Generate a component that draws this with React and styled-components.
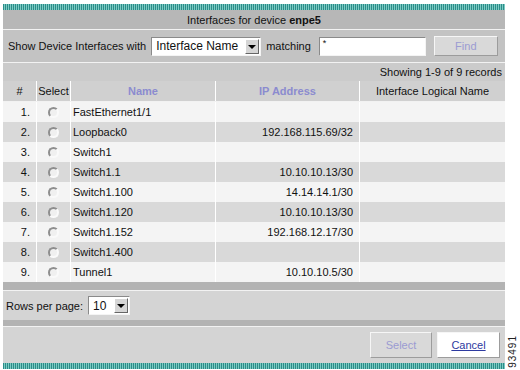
import styled, { createGlobalStyle } from "styled-components";

const rows = [
  { name: "FastEthernet1/1", ip: "" },
  { name: "Loopback0", ip: "192.168.115.69/32" },
  { name: "Switch1", ip: "" },
  { name: "Switch1.1", ip: "10.10.10.13/30" },
  { name: "Switch1.100", ip: "14.14.14.1/30" },
  { name: "Switch1.120", ip: "10.10.10.13/30" },
  { name: "Switch1.152", ip: "192.168.12.17/30" },
  { name: "Switch1.400", ip: "" },
  { name: "Tunnel1", ip: "10.10.10.5/30" },
];

const App = () => {
  return (
    <>
      <GlobalStyle />
      <Page>
        <Panel>
          <Stripe />
          <TitleBar>
            Interfaces for device&nbsp;<b>enpe5</b>
          </TitleBar>
          <FilterRow>
            <span>Show Device Interfaces with</span>
            <FakeSelect width={110}>
              <span>Interface Name</span>
              <DropButton />
            </FakeSelect>
            <span>matching</span>
            <TextBox>*</TextBox>
            <Button disabledLook width={64}>Find</Button>
          </FilterRow>
          <RecordsRow>Showing 1-9 of 9 records</RecordsRow>
          <TableRow header>
            <Cell align="center">#</Cell>
            <Cell align="center">Select</Cell>
            <Cell align="center" sort>Name</Cell>
            <Cell align="center" sort>IP Address</Cell>
            <Cell align="center">Interface Logical Name</Cell>
          </TableRow>
          <Rows>
            {rows.map((r, i) => (
              <TableRow key={r.name} dark={i % 2 === 1}>
                <Cell align="right">{i + 1}.</Cell>
                <Cell align="center">
                  <Radio />
                </Cell>
                <Cell>{r.name}</Cell>
                <Cell align="right">{r.ip}</Cell>
                <Cell />
              </TableRow>
            ))}
          </Rows>
          <DarkBar height={8} />
          <PagerRow>
            <span>Rows per page:</span>
            <FakeSelect width={42}>
              <span>10</span>
              <DropButton />
            </FakeSelect>
          </PagerRow>
          <DarkBar height={6} />
          <ButtonRow>
            <Button disabledLook width={62}>Select</Button>
            <Button width={63} link>Cancel</Button>
          </ButtonRow>
          <Stripe />
        </Panel>
        <Side>
          <FigNumber>93491</FigNumber>
        </Side>
      </Page>
    </>
  );
};

export default App;

const GlobalStyle = createGlobalStyle`
  body {
    margin: 0;
    background: #fff;
    font-family: "Liberation Sans", Arial, sans-serif;
    font-size: 11px;
    color: #111;
  }
`;

const Page = styled.div`
  display: flex;
  width: 520px;
  height: 370px;
  overflow: hidden;
`;

const Panel = styled.div`
  display: flex;
  flex-direction: column;
  width: 502px;
  margin: 4px 0 0 3px;
`;

const Stripe = styled.div`
  height: 6px;
  background: repeating-linear-gradient(90deg, #2b8c88 0 1px, #7ccac3 1px 2px);
`;

const TitleBar = styled.div`
  height: 19px;
  display: flex;
  align-items: center;
  justify-content: center;
  background: #b7b7b7;
  border-bottom: 1px solid #f2f2f2;
  font-size: 11px;
`;

const FilterRow = styled.div`
  height: 32px;
  display: flex;
  align-items: center;
  gap: 5px;
  padding-left: 5px;
  background: #c3c3c3;
  border-bottom: 1px solid #f2f2f2;
  font-size: 11px;
`;

const FakeSelect = styled.div`
  width: ${(p) => p.width}px;
  height: 19px;
  box-sizing: border-box;
  display: flex;
  align-items: center;
  justify-content: space-between;
  background: #fff;
  border: 1px solid;
  border-color: #8a8a8a #f4f4f4 #f4f4f4 #8a8a8a;
  padding: 0 1px 0 4px;
  font-size: 12px;
  white-space: nowrap;
`;

const DropButton = styled.div`
  flex: none;
  width: 14px;
  height: 15px;
  background: #d6d6d6;
  border: 1px solid;
  border-color: #fff #666 #666 #fff;
  box-sizing: border-box;
  position: relative;

  &::after {
    content: "";
    position: absolute;
    left: 2px;
    top: 5px;
    border-left: 4px solid transparent;
    border-right: 4px solid transparent;
    border-top: 4px solid #000;
  }
`;

const TextBox = styled.div`
  width: 107px;
  height: 19px;
  box-sizing: border-box;
  margin-left: 3px;
  background: #fff;
  border: 1px solid;
  border-color: #8a8a8a #f4f4f4 #f4f4f4 #8a8a8a;
  padding: 1px 0 0 3px;
  font-size: 9px;
  line-height: 9px;
`;

const Button = styled.div`
  width: ${(p) => p.width}px;
  height: 20px;
  box-sizing: border-box;
  display: flex;
  align-items: center;
  justify-content: center;
  margin-left: ${(p) => (p.width === 64 ? "3px" : "0")};
  background: ${(p) => (p.disabledLook ? "#d9d9d9" : "#fff")};
  border: 1px solid;
  border-color: #f6f6f6 #9c9c9c #9c9c9c #f6f6f6;
  color: ${(p) => (p.link ? "#2d3aa0" : "#9b9bd2")};
  text-decoration: ${(p) => (p.link ? "underline" : "none")};
  font-size: 11px;
`;

const RecordsRow = styled.div`
  height: 18px;
  display: flex;
  align-items: center;
  justify-content: flex-end;
  padding-right: 3px;
  background: #cbcbcb;
`;

const Rows = styled.div`
  display: flex;
  flex-direction: column;
`;

const TableRow = styled.div`
  display: grid;
  grid-template-columns: 33px 33px 144px 143px 145px;
  column-gap: 1px;
  height: 20px;
  background: #fff;
  border-bottom: ${(p) => (p.header ? "1px solid #f2f2f2" : "none")};

  & > div {
    background: ${(p) => (p.header ? "#d0d0d0" : p.dark ? "#d9d9d9" : "#f4f4f4")};
  }
`;

const Cell = styled.div`
  display: flex;
  align-items: center;
  justify-content: ${(p) =>
    p.align === "right" ? "flex-end" : p.align === "center" ? "center" : "flex-start"};
  padding: ${(p) => (p.align === "right" ? "0 6px 0 0" : p.align === "center" ? "0" : "0 0 0 2px")};
  font-weight: ${(p) => (p.sort ? "bold" : "normal")};
  color: ${(p) => (p.sort ? "#8b8bcf" : "#111")};
  white-space: nowrap;
`;

const Radio = styled.div`
  width: 11px;
  height: 11px;
  border-radius: 50%;
  box-sizing: border-box;
  border: 2px solid;
  border-color: #8e8e8e #fafafa #fafafa #8e8e8e;
  background: #f0f0f0;
`;

const DarkBar = styled.div`
  height: ${(p) => p.height}px;
  background: #b3b3b3;
  border-bottom: 1px solid #f2f2f2;
`;

const PagerRow = styled.div`
  height: 29px;
  display: flex;
  align-items: center;
  gap: 5px;
  padding-left: 3px;
  background: #d4d4d4;
`;

const ButtonRow = styled.div`
  height: 36px;
  display: flex;
  align-items: center;
  justify-content: flex-end;
  gap: 5px;
  padding-right: 5px;
  background: #d4d4d4;

  & > div {
    height: 26px;
  }
`;

const Side = styled.div`
  flex: 1;
  display: flex;
  align-items: flex-end;
  justify-content: center;
  padding-bottom: 2px;
`;

const FigNumber = styled.div`
  writing-mode: vertical-rl;
  transform: rotate(180deg);
  font-family: "Liberation Sans", Arial, sans-serif;
  font-size: 10px;
  letter-spacing: 1px;
  color: #222;
`;
